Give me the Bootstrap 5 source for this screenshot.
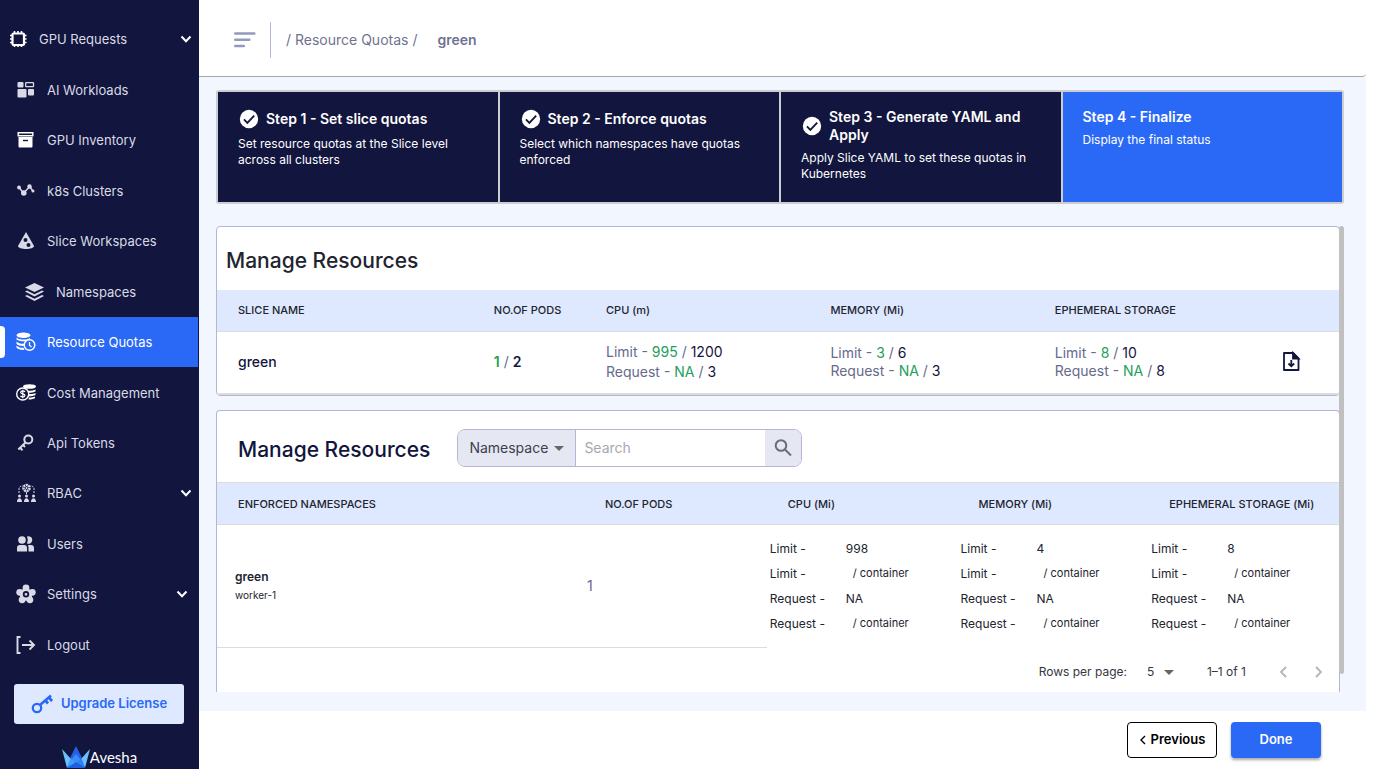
<!DOCTYPE html>
<html lang="en">
<head>
<meta charset="utf-8">
<meta name="viewport" content="width=device-width, initial-scale=1">
<title>Resource Quotas - green</title>
<link href="https://cdn.jsdelivr.net/npm/bootstrap@5.3.0/dist/css/bootstrap.min.css" rel="stylesheet">
<script src="https://cdn.jsdelivr.net/npm/bootstrap@5.3.0/dist/js/bootstrap.bundle.min.js" defer></script>
<style>
:root { --navy:#12153d; --brand:#2969f5; --pale:#dee8ff; --wash:#f2f7ff; --edge:#b5b5d6; --rule:#dcdcdc; --soft:#d9dae6; }
body { font-family:Inter,"Liberation Sans",sans-serif; font-size:13px; line-height:18px; color:#22242e; background:#fff; }
.shell { min-height:100vh; padding:0 9px 14px 0; }
.sidebar { width:199px; background:var(--navy); padding-top:14px; }
.side-list { padding-right:1px; }
.side-link { flex:1 1 50px; display:flex; align-items:center; gap:11px; padding:0 6px 0 16px; color:var(--soft); text-decoration:none; position:relative; }
.side-link svg { width:20px; height:20px; flex:none; }
.side-link .caret { width:12px; height:12px; margin-left:auto; color:#fff; }
.side-link.lead-item { padding-left:8px; }
.side-link.sub-item { padding-left:25px; }
.side-link.inset-caret { padding-right:10px; }
.side-link.current { background:var(--brand); color:#fff; }
.side-link.current::before { content:""; position:absolute; left:0; top:9px; bottom:9px; width:5px; background:#fff; border-radius:0 4px 4px 0; }
.btn-upgrade { background:var(--pale); color:var(--brand); font-size:13px; font-weight:600; height:40px; margin:14px 15px 22px 14px; border:0; border-radius:3px; }
.logo-word { font:15px/23px Lato,sans-serif; color:#fff; }
.topbar { height:77px; padding:4px 0 0 35px; border-bottom:1px solid #a3a8ab; border-radius:0 0 4px 0; background:#fff; }
.topbar-rule { width:1px; height:36px; background:#b4b8d8; margin:0 15px 0 14px; }
.crumbs { font-size:14px; color:#6f7391; }
.crumb-here { margin-left:20px; }
.workspace { background:var(--wash); padding:13px 22px 19px 17px; flex:1 1 auto; }
.steps { display:grid; grid-template-columns:repeat(4,1fr); gap:2px; padding:2px; background:#cccdd0; border-radius:3px; margin-bottom:22px; }
.step { background:var(--navy); color:#fff; padding:16px 18px 12px 20px; min-height:110px; font-size:12px; line-height:16px; }
.step.on { background:var(--brand); }
.step-title { font-size:14px; line-height:18px; font-weight:600; gap:6px; margin-bottom:6px; }
.step-title svg { width:22px; height:22px; flex:none; }
.panel { background:#fff; border:1px solid var(--edge); border-radius:4px; }
.panel-gap { margin-bottom:14px; }
.panel-cut { border-bottom:0; border-radius:4px 4px 0 0; }
.panel h2 { font-size:21px; line-height:26px; font-weight:500; margin:0; }
.panel-title { padding:21px 9px 16px; }
.panel-head { padding:18px 21px 15px; gap:27px; }
.panel-head h2 { padding-top:3px; }
.grid-table { width:100%; table-layout:fixed; }
.grid-table th { background:var(--pale); font-size:11px; font-weight:500; height:41px; padding:0 0 0 21px; border-bottom:1px solid var(--rule); white-space:nowrap; }
.grid-table td { vertical-align:middle; padding:0 0 0 21px; }
.sum-row td { height:63px; border-bottom:2px solid var(--rule); font-size:14px; color:#666a8c; line-height:18px; }
.sum-row .tall { line-height:20px; }
.ok { color:#22a05a; }
.ink, .sum-row td.ink { color:var(--navy); }
.ns-table th { border-top:1px solid var(--rule); height:42px; }
.ns-table td { height:123px; padding-left:3px; }
.ns-table td:first-child { padding-left:18px; }
.ns-table td.ruled { border-bottom:1px solid var(--rule); }
.ns-name { font-size:12px; }
.ns-worker { font-size:10px; }
.ns-table td.pod-count { font-size:14px; color:#666a8c; }
.quota { display:grid; grid-template-columns:76px 1fr; line-height:25px; font-size:12px; }
.quota small { font-size:11px; padding-left:7px; }
.finder { width:345px; height:38px; border:1px solid var(--edge); border-radius:8px; overflow:hidden; }
.finder select { appearance:none; width:118px; border:0; border-right:1px solid var(--edge); padding:0 11px; font-size:14px; color:#3c3f4e; background:#e5e7f3; }
.select-wrap { position:relative; }
.select-wrap::after { content:""; position:absolute; right:12px; top:50%; margin-top:-2px; border:5px solid transparent; border-top-color:#666; border-bottom:0; pointer-events:none; }
.finder input { border:0; outline:0; padding:0 8px; min-width:0; flex:1; font-size:14px; }
.finder input::placeholder { color:#a8a9b0; opacity:1; }
.finder button { width:36px; border:0; background:#e5e7f3; padding:0; }
.pager { height:44px; padding:3px 11px 0 0; font-size:12px; color:#35373f; }
.pager select { appearance:none; border:0; background:transparent; width:30px; padding:0; font-size:12px; color:#35373f; }
.pager .select-wrap { margin:0 30px 0 20px; }
.pager .select-wrap::after { right:3px; }
.page-arrows { gap:18px; margin-left:28px; }
.icon-btn { border:0; background:transparent; padding:0; display:flex; }
.scroll-rail { width:5px; flex:none; margin-left:-1px; margin-bottom:-3px; padding-bottom:21px; }
.scroll-thumb { width:5px; flex:1; background:#c0c0c0; border-radius:3px; }
.actions { padding:11px 45px 11px 0; gap:14px; }
.actions .btn { width:90px; height:36px; font-size:13px; font-weight:600; border-radius:4px; padding:0; }
.btn-prev { border:1px solid #000; background:#fff; color:#000; }
.btn-done { background:var(--brand); color:#fff; box-shadow:0 2px 3px rgba(0,0,0,.35); }
</style>
</head>
<body>
<svg class="d-none" xmlns="http://www.w3.org/2000/svg">
  <symbol id="chev" viewBox="0 0 12 12"><path d="M1.500 3.500 6 8.200l4.500-4.700" fill="none" stroke="currentColor" stroke-width="2"/></symbol>
  <symbol id="tick" viewBox="0 0 24 24"><circle cx="12" cy="12" r="10" fill="#fff"/><path d="m6.500 12.500 3.700 3.700 7.500-8" fill="none" stroke="#12153d" stroke-width="2"/></symbol>
</svg>
<div class="shell d-flex">
  <aside class="sidebar d-flex flex-column flex-shrink-0">
    <nav class="side-list d-flex flex-column flex-grow-1">
      <a href="#" class="side-link lead-item">
        <svg viewBox="0 0 20 20" fill="none" stroke="#fff"><rect x="4.500" y="4.500" width="11.500" height="11.500" rx="1" stroke-width="2.200"/><path d="M6.500 2v2m3.500-2v2m3.500-2v2M6.500 16v2m3.500-2v2m3.500-2v2M2 6.500h2M2 10h2m-2 3.500h2M16 6.500h2.500M16 10h2.500M16 13.500h2.500" stroke-width="1.600"/></svg>
        GPU Requests <svg class="caret"><use href="#chev"/></svg></a>
      <a href="#" class="side-link"><svg viewBox="0 0 20 20" fill="currentColor"><rect x="1.500" y="2" width="6" height="5.500" rx="1"/><rect x="9.700" y="2.700" width="7.800" height="4" rx=".5" fill="none" stroke="currentColor" stroke-width="1.300"/><rect x="1.500" y="9" width="9" height="8.500" rx="1"/><rect x="12" y="9" width="6" height="6.500" rx="1"/></svg>AI Workloads</a>
      <a href="#" class="side-link"><svg viewBox="0 0 20 20"><path d="M2.200 2.700h14.600v3H2.200z" fill="none" stroke="#fff" stroke-width="1.400"/><path d="M2.500 7h14v9.500a1 1 0 0 1-1 1h-12a1 1 0 0 1-1-1z" fill="#fff"/><path d="M7 10.500h5" stroke="#12153d" stroke-width="1.400"/></svg>GPU Inventory</a>
      <a href="#" class="side-link"><svg viewBox="0 0 20 20" fill="currentColor"><path d="m3 6.500 4.500 5.500L14 5.500l3 5" fill="none" stroke="currentColor" stroke-width="1.500"/><circle cx="3" cy="6.500" r="1.900"/><circle cx="7.800" cy="12" r="2.800"/><circle cx="13.500" cy="5.500" r="2.200"/><circle cx="17" cy="10" r="1.500"/></svg>k8s Clusters</a>
      <a href="#" class="side-link"><svg viewBox="0 0 20 20"><path d="M10 1 18 15c0 4-16 4-16 0z" fill="currentColor"/><g fill="#12153d"><circle cx="9.500" cy="9" r="2"/><circle cx="12.500" cy="14" r="2"/></g></svg>Slice Workspaces</a>
      <a href="#" class="side-link sub-item"><svg viewBox="0 0 20 20" fill="currentColor"><path d="m9.500 1 9.500 4.500-9.500 4.500L0 5.500z"/><path d="m0 9.500 2-1 7.500 3.700L17 8.500l2 1-9.500 5zM0 14l2-1 7.500 3.700L17 13l2 1-9.500 5z"/></svg>Namespaces</a>
      <a href="#" class="side-link current" aria-current="page"><svg viewBox="0 0 20 20" fill="#fff"><ellipse cx="7.500" cy="3.300" rx="7" ry="2.800"/><path d="M.5 5.500c2 2.500 11 2.800 13.500.5v2c-4 2-11 1.500-13.500-.5zM.5 9.500c2 2 5 2.500 8 2.200L7.500 14C4 14 1.500 13 .5 11.700zM.5 13.500c2 2 4 2.500 7 2.300L8.500 18c-4 .2-7-.8-8-2.500z"/><circle cx="13.500" cy="13" r="5.300" fill="#2969f5" stroke="#fff" stroke-width="1.500"/><path d="M13.500 10v3.300l2 1.700" fill="none" stroke="#fff" stroke-width="1.300"/></svg>Resource Quotas</a>
      <a href="#" class="side-link"><svg viewBox="0 0 20 20"><g fill="#fff"><ellipse cx="13.500" cy="3.500" rx="6.500" ry="2.300"/><path d="M11 7.500c3 .5 6 .2 8.500-1v2c-2 1-4 1.200-7 1.200zM13 11c3 .2 4.500-.1 6.500-1v2c-2 1-4 1.200-6.500 1.200zM13 14.500c2 .1 3.500-.1 6-1v1.800c-2 1-4 1.200-6.500 1.200z"/></g><circle cx="6.700" cy="11" r="6" fill="#12153d" stroke="#fff" stroke-width="1.400"/><path d="M9 8.800C8 7.500 4.700 7.600 4.700 9.400c0 2 4.200 1 4.200 3 0 1.900-3.500 2-4.500.5M6.800 6.700v8.600" fill="none" stroke="#fff" stroke-width="1.200"/></svg>Cost Management</a>
      <a href="#" class="side-link"><svg viewBox="0 0 20 20" fill="none" stroke="currentColor"><circle cx="12.300" cy="6.500" r="4" stroke-width="2"/><path d="m9.500 9.500-7.200 7M4 14.500l2.500 2.800M7 12l2 2" stroke-width="2"/></svg>Api Tokens</a>
      <a href="#" class="side-link"><svg viewBox="0 0 20 20" fill="currentColor"><circle cx="10.500" cy="5" r="3" fill="none" stroke="currentColor" stroke-width="2.500" stroke-dasharray="2 .6"/><circle cx="10.500" cy="5" r="1"/><path d="M3 10V6q0-3 4-3m11 7V6q0-3-4-3m-3.500 6v2" fill="none" stroke="currentColor" stroke-dasharray="2 1"/><circle cx="3.500" cy="13" r="1.500"/><circle cx="10.500" cy="13" r="1.500"/><circle cx="17.500" cy="13" r="1.500"/><path d="M1 19c0-5 5-5 5 0zM8 19c0-5 5-5 5 0zM15 19c0-5 5-5 5 0z"/></svg>RBAC <svg class="caret"><use href="#chev"/></svg></a>
      <a href="#" class="side-link"><svg viewBox="0 0 20 20" fill="currentColor"><circle cx="6" cy="6" r="3.800"/><path d="M11 2.500a3.800 3.800 0 1 1 0 7q1.700-3.500 0-7M1 17.500V14q0-3 3-3h4q3 0 3 3v3.500zM12 11h3q3 0 3 3v3.500h-5.500V14q0-2-.5-3"/></svg>Users</a>
      <a href="#" class="side-link inset-caret"><svg viewBox="0 0 20 20" fill="currentColor"><circle cx="10" cy="3.800" r="3.400"/><circle cx="16.300" cy="8.300" r="3.400"/><circle cx="13.900" cy="15.800" r="3.400"/><circle cx="6.100" cy="15.800" r="3.400"/><circle cx="3.700" cy="8.300" r="3.400"/><circle cx="10" cy="10.500" r="6.300"/><circle cx="10" cy="10.300" r="2.300" fill="none" stroke="#12153d" stroke-width="1.800"/></svg>Settings <svg class="caret"><use href="#chev"/></svg></a>
      <a href="#" class="side-link"><svg viewBox="0 0 20 20" fill="none" stroke="currentColor" stroke-width="1.900"><path d="M4.500 2H1.500v16h3M6 10h12M13.500 5.500 18 10l-4.500 4.500"/></svg>Logout</a>
    </nav>
    <button type="button" class="btn btn-upgrade d-flex align-items-center justify-content-center gap-2 p-0">
      <svg width="22" height="22" viewBox="0 0 22 22" fill="none" stroke="#2969f5"><circle cx="6" cy="15" r="4.200" stroke-width="2.300"/><path d="m9 12 11-9.500" stroke-width="2.500"/><path d="m14 7 3 3.500M17.500 4l3.500 4" stroke-width="2.800"/></svg>
      Upgrade License
    </button>
    <div class="d-flex justify-content-center">
      <svg width="28" height="23" viewBox="0 0 28 23"><path d="m0 3 9 10-4 9z" fill="#6dc0ff"/><path d="m28 3-9 10 4 9z" fill="#6dc0ff"/><path d="m14 0 6 12-6 6-6-6z" fill="#2461e8"/><path d="m14 8 5 6-5 5-5-5z" fill="#3d8cf5"/><path d="m8.500 12 5.500 5-9 5z" fill="#3f9df9"/><path d="m19.500 12-5.500 5 9 5z" fill="#2f80f4"/><path d="m14 16-9 6h18z" fill="#1c60e0"/></svg>
      <span class="logo-word">Avesha</span>
    </div>
  </aside>

  <main class="d-flex flex-column flex-grow-1">
    <header class="topbar d-flex align-items-center">
      <button class="icon-btn" type="button" aria-label="Toggle menu"><svg width="22" height="18" viewBox="0 0 22 18" stroke="#9599bd" stroke-width="2.600" stroke-linecap="round"><path d="M1.300 2.500h19M1.300 8.800h14M1.300 15h8.500"/></svg></button>
      <div class="topbar-rule"></div>
      <div class="crumbs d-flex">/&nbsp;<a href="#" class="text-reset text-decoration-none">Resource Quotas</a>&nbsp;/<span class="crumb-here fw-semibold">green</span></div>
    </header>

    <section class="workspace d-flex flex-column">
      <div class="steps">
        <div class="step"><div class="step-title d-flex align-items-center"><svg><use href="#tick"/></svg>Step 1 - Set slice quotas</div>Set resource quotas at the Slice level across all clusters</div>
        <div class="step"><div class="step-title d-flex align-items-center"><svg><use href="#tick"/></svg>Step 2 - Enforce quotas</div>Select which namespaces have quotas enforced</div>
        <div class="step"><div class="step-title d-flex align-items-center"><svg><use href="#tick"/></svg>Step 3 - Generate YAML and Apply</div>Apply Slice YAML to set these quotas in Kubernetes</div>
        <div class="step on"><div class="step-title">Step 4 - Finalize</div>Display the final status</div>
      </div>

      <div class="d-flex flex-grow-1">
        <div class="d-flex flex-column flex-grow-1">
          <div class="panel panel-gap">
            <h2 class="panel-title">Manage Resources</h2>
            <table class="grid-table">
              <colgroup><col style="width:22.8%"><col style="width:10%"><col style="width:20%"><col style="width:20%"><col style="width:20%"><col></colgroup>
              <thead><tr><th>SLICE NAME</th><th>NO.OF PODS</th><th>CPU (m)</th><th>MEMORY (Mi)</th><th>EPHEMERAL STORAGE</th><th></th></tr></thead>
              <tbody><tr class="sum-row">
                <td class="ink fw-medium">green</td>
                <td><span class="ok fw-semibold">1</span> / <span class="ink fw-semibold">2</span></td>
                <td class="tall">Limit - <span class="ok">995</span> / <span class="ink">1200</span><br>Request - <span class="ok">NA</span> / <span class="ink">3</span></td>
                <td>Limit - <span class="ok">3</span> / <span class="ink">6</span><br>Request - <span class="ok">NA</span> / <span class="ink">3</span></td>
                <td>Limit - <span class="ok">8</span> / <span class="ink">10</span><br>Request - <span class="ok">NA</span> / <span class="ink">8</span></td>
                <td><button type="button" class="icon-btn" aria-label="Download"><svg width="24" height="24" viewBox="0 0 24 24" fill="none" stroke="#12153d" stroke-width="1.800"><path d="M5 3h9l5.500 5.500V20H5z" stroke-linejoin="round"/><path d="M14 3v5.500h5.500z" fill="#12153d"/><path d="M12.300 10v6M9.500 13.500l2.800 2.800 2.800-2.800"/></svg></button></td>
              </tr></tbody>
            </table>
          </div>

          <div class="panel panel-cut">
            <div class="panel-head d-flex align-items-center">
              <h2 class="ink">Manage Resources</h2>
              <form class="finder d-flex" role="search">
                <div class="select-wrap d-flex"><select aria-label="Search by"><option>Namespace</option></select></div>
                <input type="text" placeholder="Search" aria-label="Search">
                <button type="button" aria-label="Search"><svg width="24" height="24" viewBox="0 0 24 24" fill="none" stroke="#6b6c74" stroke-width="2"><circle cx="10" cy="9.500" r="5.300"/><path d="m14 13.500 6 6"/></svg></button>
              </form>
            </div>
            <table class="grid-table ns-table">
              <colgroup><col style="width:32.7%"><col style="width:16.3%"><col style="width:17%"><col style="width:17%"><col style="width:17%"></colgroup>
              <thead><tr><th>ENFORCED NAMESPACES</th><th>NO.OF PODS</th><th>CPU (Mi)</th><th>MEMORY (Mi)</th><th>EPHEMERAL STORAGE (Mi)</th></tr></thead>
              <tbody><tr>
                <td class="ruled"><div class="ns-name fw-semibold">green</div><div class="ns-worker">worker-1</div></td>
                <td class="ruled pod-count">1</td>
                <td><div class="quota"><span>Limit -</span><span>998</span><span>Limit -</span><small>/ container</small><span>Request -</span><span>NA</span><span>Request -</span><small>/ container</small></div></td>
                <td><div class="quota"><span>Limit -</span><span>4</span><span>Limit -</span><small>/ container</small><span>Request -</span><span>NA</span><span>Request -</span><small>/ container</small></div></td>
                <td><div class="quota"><span>Limit -</span><span>8</span><span>Limit -</span><small>/ container</small><span>Request -</span><span>NA</span><span>Request -</span><small>/ container</small></div></td>
              </tr></tbody>
            </table>
            <div class="pager d-flex align-items-center justify-content-end">
              <label for="rows">Rows per page:</label>
              <div class="select-wrap d-flex"><select id="rows"><option>5</option></select></div>
              <span>1–1 of 1</span>
              <div class="page-arrows d-flex">
                <button type="button" class="icon-btn" aria-label="Previous page"><svg width="18" height="18" viewBox="0 0 18 18" fill="none" stroke="#b5b5b9" stroke-width="1.800"><path d="m12 4-5 5 5 5"/></svg></button>
                <button type="button" class="icon-btn" aria-label="Next page"><svg width="18" height="18" viewBox="0 0 18 18" fill="none" stroke="#b5b5b9" stroke-width="1.800"><path d="m6 4 5 5-5 5"/></svg></button>
              </div>
            </div>
          </div>
        </div>
        <div class="scroll-rail d-flex"><div class="scroll-thumb"></div></div>
      </div>
    </section>

    <footer class="actions d-flex justify-content-end">
      <button type="button" class="btn btn-prev d-flex align-items-center justify-content-center"><svg class="me-1" width="8" height="12" viewBox="0 0 8 12" fill="none" stroke="#000" stroke-width="1.400"><path d="M6 2 2 6l4 4"/></svg>Previous</button>
      <button type="button" class="btn btn-done">Done</button>
    </footer>
  </main>
</div>
</body>
</html>
